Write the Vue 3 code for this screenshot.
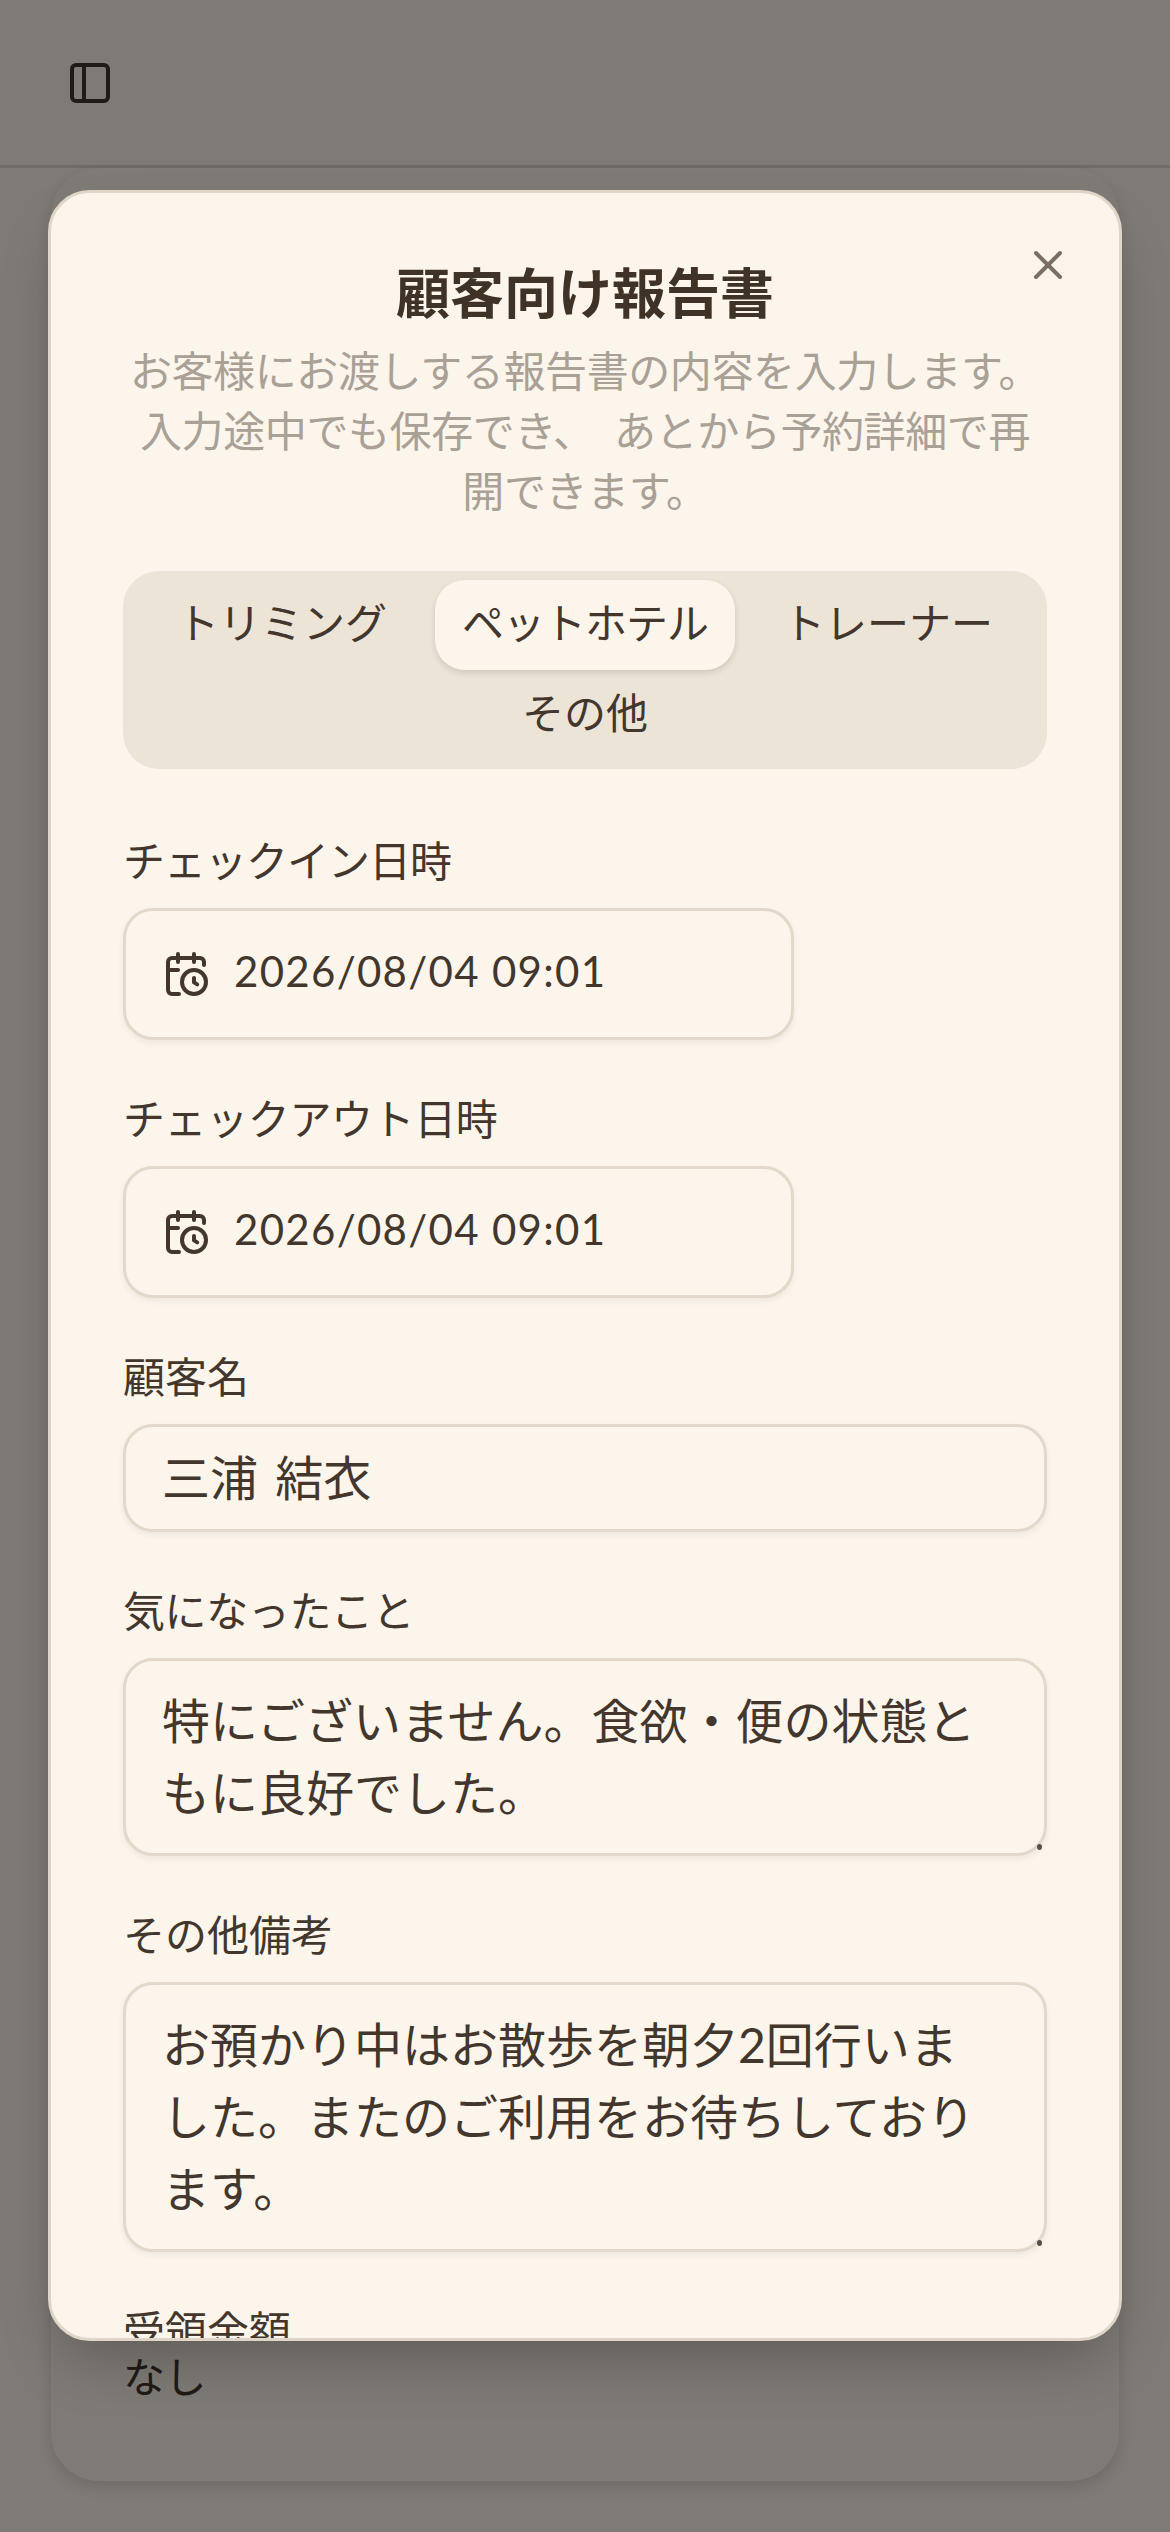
<script setup>
const tabs = [
  { label: 'トリミング', active: false },
  { label: 'ペットホテル', active: true },
  { label: 'トレーナー', active: false },
  { label: 'その他', active: false },
]
const dates = [
  { label: 'チェックイン日時', value: '2026/08/04 09:01', fit: 'tight' },
  { label: 'チェックアウト日時', value: '2026/08/04 09:01', fit: 'snug' },
]
</script>

<template>
  <div class="page">
    <header class="topbar">
      <svg class="panel-icon" viewBox="0 0 24 24" fill="none" stroke="currentColor" stroke-width="2" stroke-linecap="round" stroke-linejoin="round">
        <rect x="3" y="3" width="18" height="18" rx="2" />
        <path d="M9 3v18" />
      </svg>
    </header>
    <main class="main">
      <section class="card">
        <p class="card-value">なし</p>
      </section>
    </main>

    <div class="overlay"></div>

    <section class="modal">
      <svg class="close" viewBox="0 0 24 24" fill="none" stroke="currentColor" stroke-width="2" stroke-linecap="round" stroke-linejoin="round">
        <path d="M18 6 6 18" />
        <path d="m6 6 12 12" />
      </svg>

      <h2 class="title">顧客向け報告書</h2>
      <p class="desc">お客様にお渡しする報告書の内容を入力します。入力途中でも保存でき、 あとから予約詳細で再開できます。</p>

      <div class="tabs">
        <div v-for="tab in tabs" :key="tab.label" class="tab" :class="{ active: tab.active }">{{ tab.label }}</div>
      </div>

      <div class="fields">
        <div v-for="d in dates" :key="d.label" class="field">
          <div class="label" :class="d.fit">{{ d.label }}</div>
          <div class="control date">
            <svg class="cal" viewBox="0 0 24 24" fill="none" stroke="currentColor" stroke-width="2" stroke-linecap="round" stroke-linejoin="round">
              <path d="M16 14v2.2l1.6 1" />
              <path d="M16 2v4" />
              <path d="M21 7.5V6a2 2 0 0 0-2-2H5a2 2 0 0 0-2 2v14a2 2 0 0 0 2 2h3.5" />
              <path d="M3 10h5" />
              <path d="M8 2v4" />
              <circle cx="16" cy="16" r="6" />
            </svg>
            <span class="date-text">{{ d.value }}</span>
          </div>
        </div>

        <div class="field">
          <div class="label">顧客名</div>
          <div class="control input">三浦 結衣</div>
        </div>

        <div class="field">
          <div class="label snug">気になったこと</div>
          <div class="control area">特にございません。食欲・便の状態ともに良好でした。<i class="grip"></i></div>
        </div>

        <div class="field">
          <div class="label">その他備考</div>
          <div class="control area">お預かり中はお散歩を朝夕2回行いました。またのご利用をお待ちしております。<i class="grip"></i></div>
        </div>

        <div class="field">
          <div class="label">受領金額</div>
        </div>
      </div>
    </section>
  </div>
</template>

<style>
html, body { margin: 0; padding: 0; background: #7f7b76; }
</style>

<style scoped>
.page {
  position: relative;
  width: 1170px;
  height: 2532px;
  overflow: hidden;
  background: #fcf5eb;
  color: #43372d;
  font-family: "Lato", "Noto Sans CJK JP", sans-serif;
  font-size: 42px;
}
.topbar {
  height: 165px;
  border-bottom: 3px solid #e2d8ca;
  display: flex;
  align-items: center;
  padding-left: 66px;
}
.panel-icon { width: 48px; height: 48px; display: block; }
.main { padding: 0 51px; }
.card {
  height: 2313px;
  box-sizing: border-box;
  border-radius: 48px;
  background: #fcf5eb;
  box-shadow: 0 6px 15px rgba(0, 0, 0, 0.12);
  display: flex;
  flex-direction: column;
  justify-content: flex-end;
  padding: 0 72px 72px;
}
.card-value { margin: 0; line-height: 63px; color: #43372d; letter-spacing: -0.5px; }
.overlay { position: absolute; inset: 0; background: rgba(0, 0, 0, 0.5); }
.modal {
  position: absolute;
  left: 48px;
  top: 190px;
  width: 1074px;
  height: 2151px;
  box-sizing: border-box;
  overflow: hidden;
  background: #fcf5eb;
  border: 3px solid #e0d6c8;
  border-radius: 42px;
  padding: 63px 72px 0;
  box-shadow: 0 30px 60px -15px rgba(0, 0, 0, 0.25);
}
.close { position: absolute; left: 973px; top: 48px; width: 48px; height: 48px; color: #7a6f65; }
.title { margin: 0; font-size: 54px; line-height: 75px; font-weight: 700; text-align: center; color: #3f3227; }
.desc { margin: 10px 0 0; font-size: 42px; line-height: 60px; text-align: center; color: #a9a096; word-spacing: 9px; letter-spacing: -0.4px; }
.tabs {
  margin-top: 50px;
  box-sizing: border-box;
  height: 198px;
  padding: 9px;
  border-radius: 36px;
  background: #ede4d8;
  display: flex;
  flex-wrap: wrap;
  justify-content: center;
  column-gap: 24px;
}
.tab {
  height: 90px;
  line-height: 87px;
  padding: 0 24px;
  border-radius: 30px;
}
.tab.active {
  padding: 0 27px;
  letter-spacing: -1px;
  background: #fcf5eb;
  box-shadow: 0 3px 6px rgba(0, 0, 0, 0.12);
}
.fields { margin-top: 61px; display: flex; flex-direction: column; gap: 48px; }
.label { line-height: 63px; margin-bottom: 15px; }
.label.tight { letter-spacing: -1px; }
.label.snug { letter-spacing: -0.4px; }
.control {
  box-sizing: border-box;
  border: 3px solid #e3d9cb;
  border-radius: 30px;
  background: #fcf5eb;
  box-shadow: 0 3px 6px rgba(0, 0, 0, 0.06);
  position: relative;
}
.date {
  width: 671px;
  height: 132px;
  display: flex;
  align-items: center;
  gap: 24px;
  padding-left: 36px;
  font-size: 42px;
}
.cal { width: 48px; height: 48px; flex: none; }
.date-text { letter-spacing: 1.3px; padding-bottom: 6px; }
.input { height: 108px; padding: 0 36px; font-size: 48px; line-height: 102px; word-spacing: 5px; }
.area { padding: 24px 42px 24px 36px; font-size: 48px; line-height: 72px; }
.grip {
  position: absolute;
  right: 2px;
  bottom: 3px;
  width: 5px;
  height: 6px;
  border-radius: 50%;
  background: #5a5048;
}
</style>
